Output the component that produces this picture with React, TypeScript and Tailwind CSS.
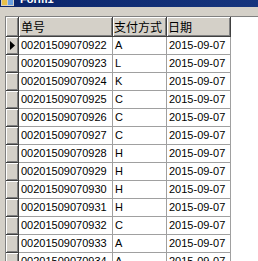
import { FC } from 'react';

const rows: [string, string][] = [
  ['00201509070922', 'A'],
  ['00201509070923', 'L'],
  ['00201509070924', 'K'],
  ['00201509070925', 'C'],
  ['00201509070926', 'C'],
  ['00201509070927', 'C'],
  ['00201509070928', 'H'],
  ['00201509070929', 'H'],
  ['00201509070930', 'H'],
  ['00201509070931', 'H'],
  ['00201509070932', 'C'],
  ['00201509070933', 'A'],
  ['00201509070934', 'A'],
];

const cjk = "font-['Noto_Sans_CJK_SC','Noto_Sans',sans-serif]";
const latin = "font-['Liberation_Sans',Arial,sans-serif]";

const raised =
  'bg-[#d4d0c8] border-r border-b border-[#404040] shadow-[inset_1px_1px_#ffffff,inset_-1px_-1px_#808080]';

const App: FC = () => {
  return (
    <div className="w-[258px] h-[261px] overflow-hidden bg-[#d4d0c8] flex flex-col">
      {/* title bar, only its bottom edge is on screen */}
      <div className="h-[7px] shrink-0 overflow-hidden bg-gradient-to-r from-[#0a246a] to-[#16357e]">
        <div className="-mt-[8px] h-[15px] flex items-center gap-[6px] pl-[1px]">
          <svg width="13" height="13" viewBox="0 0 13 13">
            <rect x="0" y="0" width="13" height="13" fill="#d4d0c8" />
            <rect x="1" y="1" width="11" height="3" fill="#0a246a" />
            <rect x="1" y="5" width="5" height="7" fill="#e8c048" />
            <rect x="7" y="5" width="5" height="7" fill="#6aa0e0" />
          </svg>
          <span className={`${latin} text-[11px] font-bold text-white leading-none`}>
            Form1
          </span>
        </div>
      </div>

      <div className="flex-1 pt-[9px] pl-[5px]">
        <div className="h-full bg-white border-l border-t border-[#808080]">
          {/* header */}
          <div className="flex h-[20px]">
            <div className={`w-[13px] ${raised}`} />
            <div className={`w-[94px] ${raised} ${cjk} text-[12px] text-black leading-[19px] pl-[2px]`}>
              单号
            </div>
            <div className={`w-[54px] ${raised} ${cjk} text-[12px] text-black leading-[19px] pl-[1px]`}>
              支付方式
            </div>
            <div className={`w-[64px] ${raised} ${cjk} text-[12px] text-black leading-[19px] pl-[1px]`}>
              日期
            </div>
          </div>

          {rows.map(([no, pay], i) => (
            <div key={no} className={`flex h-[18px] ${latin} text-[11px] text-black`}>
              <div className={`w-[13px] ${raised} flex items-center justify-center`}>
                {i === 0 && (
                  <svg width="5" height="9" viewBox="0 0 5 9">
                    <path d="M0 0 L5 4.5 L0 9 Z" fill="#000" />
                  </svg>
                )}
              </div>
              <div className="w-[94px] border-r border-b border-[#a0a0a0] pl-[2px] leading-[17px]">
                {no}
              </div>
              <div className="w-[54px] border-r border-b border-[#a0a0a0] pl-[2px] leading-[17px]">
                {pay}
              </div>
              <div className="w-[64px] border-r border-b border-[#a0a0a0] pl-[2px] leading-[17px]">
                2015-09-07
              </div>
            </div>
          ))}
        </div>
      </div>
    </div>
  );
};

export default App;
